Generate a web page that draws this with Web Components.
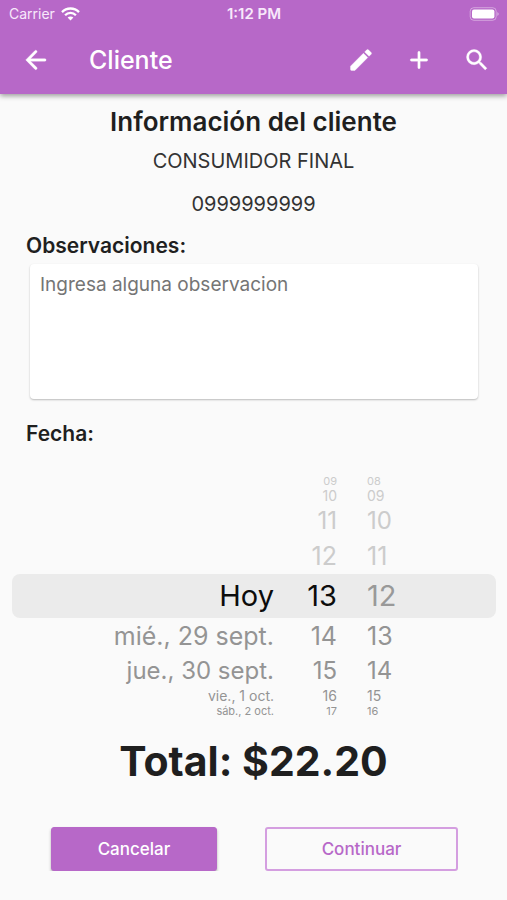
<!DOCTYPE html>
<html lang="es">
<head>
<meta charset="utf-8">
<meta name="viewport" content="width=device-width, initial-scale=1">
<title>Cliente</title>
<style>
  :root { --brand: #b768c8; --ink: #1f1f1f; --paper: #fafafa; }
  body { margin: 0; background: var(--paper); color: var(--ink); font-family: Inter, "Liberation Sans", sans-serif; }
</style>
</head>
<body>
<client-page></client-page>
<script>
const define = (name, html, setup) => {
  const template = document.createElement('template');
  template.innerHTML = html;
  customElements.define(name, class extends HTMLElement {
    constructor() {
      super();
      this.attachShadow({ mode: 'open' }).append(template.content.cloneNode(true));
    }
    connectedCallback() { if (setup) setup(this, this.shadowRoot); }
  });
};

define('status-bar', `
  <style>
    :host { display: grid; grid-template-columns: 1fr auto 1fr; align-items: center; height: 28px; padding: 0 8px 0 9px; color: #f8e8fb; font-size: 14px; line-height: 20px; }
    .left { display: flex; align-items: center; gap: 6px; }
    .time { font-size: 15px; font-weight: 600; }
    .battery { justify-self: end; }
    svg { display: block; }
  </style>
  <span class="left">Carrier
    <svg width="19" height="14" viewBox="0 0 19 14" fill="none" stroke="#fff" stroke-width="2.3" aria-hidden="true">
      <path d="M1 5.1C5.6.3 13.4.3 18 5.1"/><path d="M4.1 8.2C7 5.2 12 5.2 14.9 8.2"/>
      <path d="M6.6 10.6C8.2 9 10.8 9 12.4 10.6L9.5 13.5Z" fill="#fff" stroke="none"/>
    </svg>
  </span>
  <span class="time">1:12 PM</span>
  <svg class="battery" width="30" height="14" viewBox="0 0 30 14" aria-label="Batería" role="img">
    <rect x="1.2" y=".7" width="26" height="12.6" rx="3.6" fill="none" stroke="#fff" stroke-opacity=".4"/>
    <rect x="3" y="2.5" width="22.4" height="9" rx="2" fill="#fff"/>
    <path d="M28.4 5Q31 7 28.4 9Z" fill="#fff" fill-opacity=".5"/>
  </svg>`);

define('icon-button', `
  <style>
    :host { display: block; }
    button { display: grid; place-items: center; width: 48px; height: 48px; padding: 0; border: 0; background: none; color: #fff; cursor: pointer; }
    svg { display: block; width: 28px; height: 28px; fill: currentColor; }
  </style>
  <button type="button"><svg viewBox="0 0 24 24" aria-hidden="true"><path/></svg></button>`,
  (host, root) => {
    const paths = {
      back: 'M19.6 10.9H7.3l5.3-5.3a1.1 1.1 0 0 0-1.6-1.6L3.2 11.9 11 19.9a1.1 1.1 0 0 0 1.6-1.6L7.3 13h12.3a1.05 1.05 0 0 0 0-2.1z',
      edit: 'M3 17.25V20q0 1 1 1h2.75L17.81 9.94l-3.75-3.75L3 17.25zM20.71 7.04a1 1 0 0 0 0-1.41l-2.34-2.34a1 1 0 0 0-1.41 0l-1.83 1.83 3.75 3.75 1.83-1.83z',
      add: 'M18.5 13H13v5.5a1 1 0 0 1-2 0V13H5.500a1 1 0 0 1 0-2H11V5.500a1 1 0 0 1 2 0V11h5.500a1 1 0 0 1 0 2z',
      search: 'M15.5 14h-.79l-.28-.27A6.47 6.47 0 0 0 16 9.5 6.5 6.5 0 1 0 9.5 16c1.61 0 3.09-.59 4.23-1.57l.27.28v.79l5 4.99L20.49 19l-4.99-5zm-6 0C7.01 14 5 11.99 5 9.5S7.01 5 9.5 5 14 7.01 14 9.5 11.99 14 9.5 14z'
    };
    const path = root.querySelector('path');
    path.setAttribute('d', paths[host.getAttribute('icon')]);
    path.setAttribute('stroke', 'currentColor');
    path.setAttribute('stroke-width', '.3');
    root.querySelector('button').setAttribute('aria-label', host.getAttribute('label'));
  });

define('app-header', `
  <style>
    :host { display: block; height: 94px; background: var(--brand); color: #fff; box-shadow: 0 2px 5px rgb(0 0 0 / .38); }
    .bar { display: flex; align-items: center; height: 64px; padding: 0 6px 0 12px; }
    h1 { flex: 1; margin: 0 0 0 29px; font-size: 25px; line-height: 32px; font-weight: 500; }
    nav { display: flex; gap: 10px; }
  </style>
  <status-bar></status-bar>
  <div class="bar">
    <icon-button icon="back" label="Atrás"></icon-button>
    <h1><slot></slot></h1>
    <nav><icon-button icon="edit" label="Editar"></icon-button><icon-button icon="add" label="Agregar"></icon-button><icon-button icon="search" label="Buscar"></icon-button></nav>
  </div>`);

define('client-info', `
  <style>
    :host { display: block; text-align: center; }
    h2 { margin: 0; font-size: 26px; line-height: 36px; font-weight: 600; }
    p { margin: 0; font-size: 20px; line-height: 43px; color: #333; }
  </style>
  <h2>Información del cliente</h2>
  <p><slot name="name"></slot></p>
  <p><slot name="number"></slot></p>`);

define('note-field', `
  <style>
    :host { display: block; padding: 6px 26px 0; }
    label { display: block; font-size: 21px; line-height: 28px; font-weight: 600; }
    textarea { display: block; box-sizing: border-box; width: calc(100% - 7px); height: 135px; margin: 4px 3px 0 4px; padding: 8px 10px; border: 0; border-radius: 4px; background: #fff; box-shadow: 0 1px 2px rgb(0 0 0 / .26); color: inherit; font: 19px/26px Inter, "Liberation Sans", sans-serif; resize: none; }
    textarea::placeholder { color: #757575; opacity: 1; }
  </style>
  <label for="note">Observaciones:</label>
  <textarea id="note" placeholder="Ingresa alguna observacion"></textarea>`);

define('picker-wheel', `
  <style>
    :host { display: block; }
    ul { margin: 0; padding: 0; list-style: none; text-align: var(--align, right); }
    li { height: 36px; line-height: 36px; font-size: 25px; color: #949494; white-space: nowrap; }
    .d0 { height: 44px; line-height: 44px; font-size: 29px; color: var(--selected, #0c0c0c); }
    .d2 { height: 34px; line-height: 34px; font-size: 24px; }
    .d3 { height: 16px; line-height: 16px; font-size: 14px; }
    .d4 { height: 14px; line-height: 14px; font-size: 11px; }
    .past { color: #cccccc; }
  </style>
  <ul role="listbox"></ul>`,
  (host, root) => {
    const list = root.querySelector('ul');
    list.setAttribute('aria-label', host.getAttribute('label'));
    list.replaceChildren(...host.getAttribute('values').split('|').map((text, i) => {
      const row = document.createElement('li');
      row.setAttribute('role', 'option');
      row.setAttribute('aria-selected', String(i === 4));
      row.className = 'd' + Math.abs(i - 4) + (i < 4 ? ' past' : '');
      row.textContent = text;
      return row;
    }));
  });

define('date-picker', `
  <style>
    :host { display: block; padding-top: 21px; }
    h3 { margin: 0; padding: 0 26px; font-size: 21px; line-height: 28px; font-weight: 600; }
    .wheels { display: grid; grid-template-columns: 274fr 63fr 170fr; margin-top: 26px; isolation: isolate; }
    .wheels > * { grid-row: 1; }
    .band { grid-column: 1 / -1; align-self: center; height: 44px; margin: 0 11px 0 12px; border-radius: 8px; background: #ebebeb; z-index: -1; }
    .day { grid-column: 1; } .hour { grid-column: 2; }
    .minute { grid-column: 3; --align: left; --selected: #999; padding-left: 30px; }
  </style>
  <h3>Fecha:</h3>
  <div class="wheels">
    <div class="band"></div>
    <picker-wheel class="day" label="Día" values="||||Hoy|mié., 29 sept.|jue., 30 sept.|vie., 1 oct.|sáb., 2 oct."></picker-wheel>
    <picker-wheel class="hour" label="Hora" values="09|10|11|12|13|14|15|16|17"></picker-wheel>
    <picker-wheel class="minute" label="Minuto" values="08|09|10|11|12|13|14|15|16"></picker-wheel>
  </div>`);

define('action-button', `
  <style>
    :host { display: block; }
    button { box-sizing: border-box; width: 100%; height: 44px; padding: 0; border: 1px solid var(--brand); border-radius: 3px; background: var(--brand); color: #fff; font: 500 17px/24px Inter, "Liberation Sans", sans-serif; box-shadow: 0 2px 3px rgb(0 0 0 / .3); cursor: pointer; }
    :host([outlined]) button { border: 2px solid #d49ee0; background: transparent; color: var(--brand); box-shadow: none; }
  </style>
  <button type="button"><slot></slot></button>`);

define('client-page', `
  <style>
    :host { display: block; }
    main { padding-top: 10px; }
    .total { margin: 17px 0 0; font-size: 41px; line-height: 52px; font-weight: 700; text-align: center; }
    .actions { display: grid; grid-template-columns: 166fr 193fr; gap: 48px; margin-top: 40px; padding: 0 49px 0 51px; }
  </style>
  <app-header>Cliente</app-header>
  <main>
    <client-info><span slot="name">CONSUMIDOR FINAL</span><span slot="number">0999999999</span></client-info>
    <note-field></note-field>
    <date-picker></date-picker>
    <p class="total">Total: $22.20</p>
    <div class="actions"><action-button>Cancelar</action-button><action-button outlined>Continuar</action-button></div>
  </main>`);
</script>
</body>
</html>
